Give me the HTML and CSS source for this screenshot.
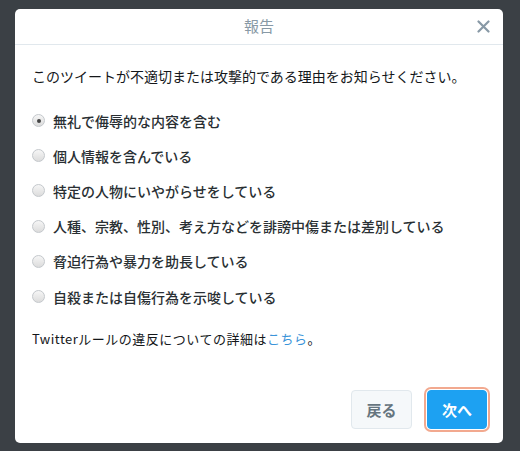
FILE: index.html
```html
<!DOCTYPE html>
<html>
<head>
    <title>報告</title>
    <link rel="stylesheet" href="styles.css">
</head>
<body>
    <div class="modal">
        <div class="modal-header">
            <span></span>
            <h2 class="modal-title">報告</h2>
            <button type="button" class="close-btn" aria-label="閉じる">
                <svg width="13" height="13" viewBox="0 0 13 13">
                    <path d="M1.5 1.5 L11.5 11.5 M11.5 1.5 L1.5 11.5" stroke="#8899a6" stroke-width="2.2" stroke-linecap="round"/>
                </svg>
            </button>
        </div>

        <div class="modal-body">
            <p class="intro">このツイートが不適切または攻撃的である理由をお知らせください。</p>

            <div class="options">
                <label class="option"><span class="radio checked"></span>無礼で侮辱的な内容を含む</label>
                <label class="option"><span class="radio"></span>個人情報を含んでいる</label>
                <label class="option"><span class="radio"></span>特定の人物にいやがらせをしている</label>
                <label class="option"><span class="radio"></span>人種、宗教、性別、考え方などを誹謗中傷または差別している</label>
                <label class="option"><span class="radio"></span>脅迫行為や暴力を助長している</label>
                <label class="option"><span class="radio"></span>自殺または自傷行為を示唆している</label>
            </div>

            <p class="rules">Twitterルールの違反についての詳細は<a href="#">こちら</a>。</p>
        </div>

        <div class="modal-footer">
            <button type="button" class="btn btn-back">戻る</button>
            <button type="button" class="btn btn-next">次へ</button>
        </div>
    </div>
</body>
</html>
```

FILE: styles.css
```css
body {
    margin: 0;
    padding: 9px 0 0 15px;
    height: 451px;
    box-sizing: border-box;
    overflow: hidden;
    background-color: #3b4045;
    font-family: "Noto Sans CJK JP", "Liberation Sans", sans-serif;
}

.modal {
    width: 488px;
    height: 434px;
    background-color: #fff;
    border-radius: 5px;
    display: flex;
    flex-direction: column;
    box-sizing: border-box;
}

.modal-header {
    height: 35px;
    border-bottom: 1px solid #e1e8ed;
    display: grid;
    grid-template-columns: 1fr auto 1fr;
    align-items: center;
}
.modal-title {
    margin: 0;
    font-size: 15px;
    font-weight: normal;
    color: #8899a6;
    line-height: 20px;
    padding-bottom: 1px;
}
.close-btn {
    justify-self: end;
    margin-right: 13px;
    padding: 0;
    border: none;
    background: none;
    width: 14px;
    height: 14px;
    display: flex;
    align-items: center;
    justify-content: center;
}

.modal-body {
    padding: 21px 17px 0 17px;
}
.intro {
    margin: 0 0 17px 0;
    font-size: 14px;
    line-height: 20px;
    color: #14171a;
}

.options {
    display: flex;
    flex-direction: column;
}
.option {
    height: 35.2px;
    display: flex;
    align-items: center;
    font-size: 14px;
    font-weight: 500;
    color: #292f33;
}
.radio {
    width: 11px;
    height: 11px;
    margin: 0 8px 0 0;
    border-radius: 50%;
    border: 1px solid #c4c8cc;
    background: linear-gradient(#f6f6f6, #dcdcdc);
    position: relative;
    flex: none;
}
.radio.checked::after {
    content: "";
    position: absolute;
    top: 3.5px;
    left: 3.5px;
    width: 4px;
    height: 4px;
    border-radius: 50%;
    background-color: #444;
}

.rules {
    margin: 15px 0 0 0;
    font-size: 13px;
    line-height: 20px;
    color: #14171a;
    letter-spacing: 0.5px;
}
.rules a {
    color: #3b94d9;
    text-decoration: none;
}

.modal-footer {
    margin-top: auto;
    padding: 0 16px 14px 0;
    display: flex;
    justify-content: flex-end;
    gap: 15px;
}
.btn {
    width: 61px;
    height: 39px;
    border-radius: 4px;
    font-family: "Noto Sans CJK JP", "Liberation Sans", sans-serif;
    font-size: 15px;
    font-weight: bold;
    padding: 0;
}
.btn-back {
    background-color: #f5f8fa;
    border: 1px solid #e1e8ed;
    color: #66757f;
}
.btn-next {
    width: 60px;
    background-color: #1da1f2;
    border: 1px solid #1da1f2;
    color: #fff;
    box-shadow: 0 0 0 1px #fff, 0 0 0 3px #f2a98f;
}
```
